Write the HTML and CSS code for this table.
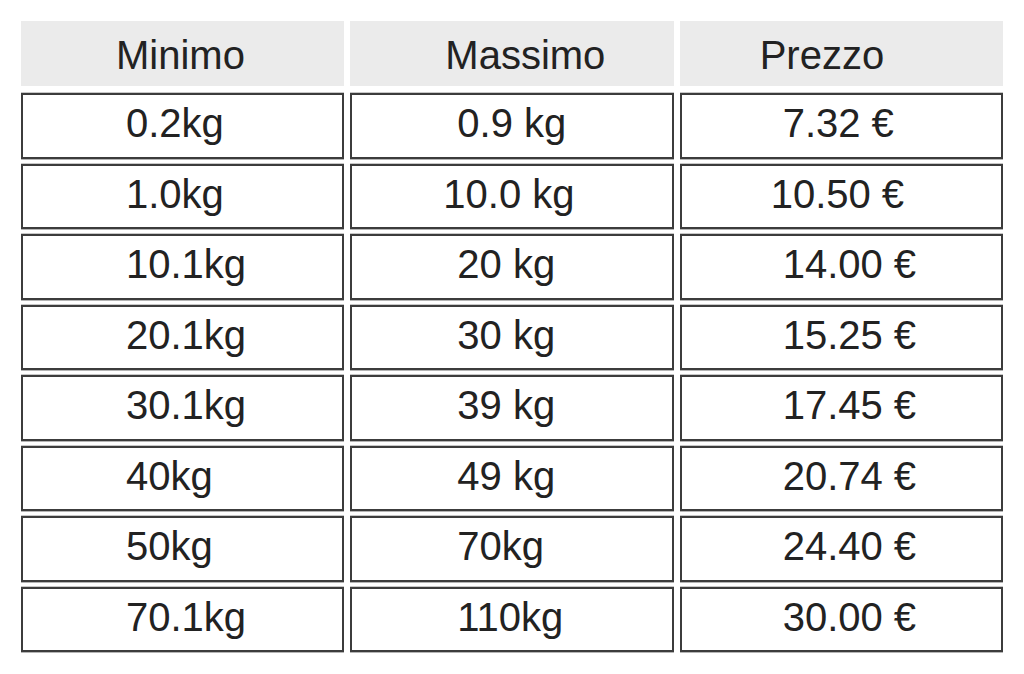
FILE: index.html
```html
<!DOCTYPE html>
<html lang="it">
<head>
<meta charset="utf-8">
<title>Tariffe</title>
<link rel="stylesheet" href="styles.css">
</head>
<body>
<table class="rates">
  <thead>
    <tr>
      <th class="c1">Minimo</th>
      <th class="c2">Massimo</th>
      <th class="c3">Prezzo</th>
    </tr>
  </thead>
  <tbody>
    <tr><td class="c1">0.2kg</td><td class="c2">0.9 kg</td><td class="c3">7.32 €</td></tr>
    <tr><td class="c1">1.0kg</td><td class="c2 shift">10.0 kg</td><td class="c3 shift">10.50 €</td></tr>
    <tr><td class="c1">10.1kg</td><td class="c2">20 kg</td><td class="c3">14.00 €</td></tr>
    <tr><td class="c1">20.1kg</td><td class="c2">30 kg</td><td class="c3">15.25 €</td></tr>
    <tr><td class="c1">30.1kg</td><td class="c2">39 kg</td><td class="c3">17.45 €</td></tr>
    <tr><td class="c1">40kg</td><td class="c2">49 kg</td><td class="c3">20.74 €</td></tr>
    <tr><td class="c1">50kg</td><td class="c2">70kg</td><td class="c3">24.40 €</td></tr>
    <tr><td class="c1">70.1kg</td><td class="c2">110kg</td><td class="c3">30.00 €</td></tr>
  </tbody>
</table>
</body>
</html>
```
FILE: styles.css
```css
html, body {
  margin: 0;
  padding: 0;
  background: #ffffff;
}

body {
  font-family: "Liberation Sans", Arial, sans-serif;
  color: #222222;
}

.rates {
  margin: 16px 0 0 15px;
  width: 994px;
  table-layout: fixed;
  border-collapse: separate;
  border-spacing: 6px 5px;
  font-size: 40px;
  line-height: 46px;
}

.rates th {
  font-weight: normal;
  text-align: left;
  background: #ebebeb;
  background-clip: padding-box;
  padding: 11px 0 8px 0;
  border-bottom: 2px solid transparent;
  white-space: nowrap;
}

.rates th.c1 { padding-left: 95px; }
.rates th.c2 { padding-left: 95px; }
.rates th.c3 { padding-left: 80px; }

.rates td {
  text-align: left;
  border: 2px solid #3c3c3c;
  padding: 5px 0 10.5px 0;
  white-space: nowrap;
  box-shadow: 0 1px 0 #b5b5b5, 0 -1px 0 #c8c8c8;
}

.rates td.c1 { padding-left: 103px; }
.rates td.c2 { padding-left: 105px; }
.rates td.c3 { padding-left: 101px; }
.rates td.c2.shift { padding-left: 91px; }
.rates td.c3.shift { padding-left: 89px; }
```
